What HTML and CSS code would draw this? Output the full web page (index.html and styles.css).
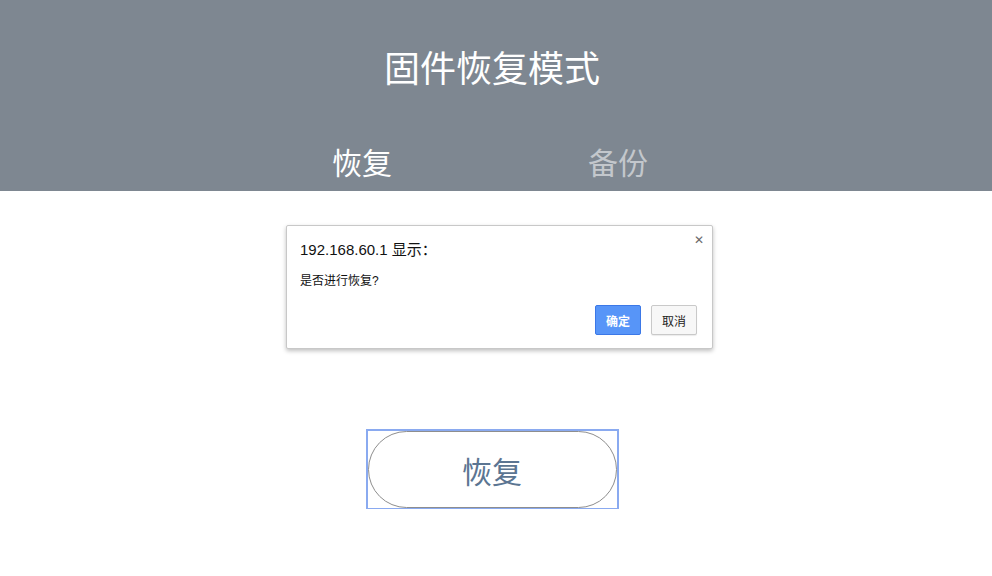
FILE: index.html
```html
<!DOCTYPE html>
<html lang="zh-CN">
<head>
<meta charset="utf-8">
<title>固件恢复模式</title>
<link rel="stylesheet" href="styles.css">
</head>
<body>
<header class="header">
  <h1 class="title">固件恢复模式</h1>
  <nav class="tabs">
    <span class="tab tab-active">恢复</span>
    <span class="tab tab-muted">备份</span>
  </nav>
</header>
<main class="main">
  <button class="restore-btn" type="button"><span class="restore-pill">恢复</span></button>
</main>
<div class="dialog" role="alertdialog">
  <div class="dialog-close">✕</div>
  <div class="dialog-title">192.168.60.1 显示：</div>
  <div class="dialog-msg">是否进行恢复?</div>
  <div class="dialog-actions">
    <button class="dbtn dbtn-ok" type="button">确定</button>
    <button class="dbtn dbtn-cancel" type="button">取消</button>
  </div>
</div>
</body>
</html>
```
FILE: styles.css
```css
html, body {
  margin: 0;
  padding: 0;
  background: #ffffff;
  font-family: "Liberation Sans", "Noto Sans CJK SC", sans-serif;
}
.header {
  background: #7e8791;
  height: 191px;
  box-sizing: border-box;
  padding: 44px 8px 0 0;
  display: flex;
  flex-direction: column;
  align-items: center;
}
.title {
  margin: 0;
  font-family: "Noto Sans CJK SC", sans-serif;
  font-weight: 400;
  font-size: 36px;
  line-height: 44px;
  color: #ffffff;
}
.tabs {
  margin-top: 55px;
  display: flex;
  gap: 196px;
  transform: translateX(-2px);
}
.tab {
  font-family: "Noto Sans CJK SC", sans-serif;
  font-size: 30px;
  line-height: 36px;
}
.tab-active { color: #ffffff; }
.tab-muted { color: #c3c7cc; }
.main {
  display: flex;
  justify-content: center;
  padding: 239px 8px 0 0;
}
.restore-btn {
  background: #fff;
  border: 0;
  padding: 1px;
  margin: 0;
  outline: 2px solid #8aaaf0;
  outline-offset: -1px;
  cursor: pointer;
  width: 251px;
  height: 79px;
  box-sizing: border-box;
  display: flex;
}
.restore-pill {
  flex: 1;
  border: 1px solid #8e8e8e;
  border-radius: 39px;
  display: flex;
  align-items: center;
  justify-content: center;
  font-family: "Noto Sans CJK SC", sans-serif;
  font-size: 30px;
  color: #5b7592;
}
.dialog {
  position: absolute;
  left: 286px;
  top: 225px;
  width: 427px;
  height: 124px;
  box-sizing: border-box;
  background: #fff;
  border: 1px solid #c8c8c8;
  border-radius: 2px;
  box-shadow: 0 2px 4px rgba(0,0,0,0.25);
  padding: 13px 15px 0 13px;
}
.dialog-close {
  position: absolute;
  right: 8px;
  top: 6px;
  font-size: 12px;
  line-height: 16px;
  font-weight: bold;
  color: #6a6a6a;
  font-family: "DejaVu Sans", sans-serif;
}
.dialog-title {
  font-size: 15px;
  line-height: 22px;
  color: #111;
}
.dialog-msg {
  margin-top: 12px;
  font-size: 12px;
  line-height: 16px;
  color: #111;
}
.dialog-actions {
  display: flex;
  justify-content: flex-end;
  gap: 10px;
  margin-top: 16px;
}
.dbtn {
  width: 46px;
  height: 30px;
  box-sizing: border-box;
  font-family: "Noto Sans CJK SC", sans-serif;
  font-size: 12px;
  padding: 0;
  border-radius: 2px;
}
.dbtn-ok {
  background: #5795f8;
  border: 1px solid #3b78e7;
  color: #fff;
  font-weight: bold;
}
.dbtn-cancel {
  background: #f7f7f7;
  border: 1px solid #c9c9c9;
  color: #222;
  box-shadow: 0 1px 1px rgba(0,0,0,0.08);
}
```
